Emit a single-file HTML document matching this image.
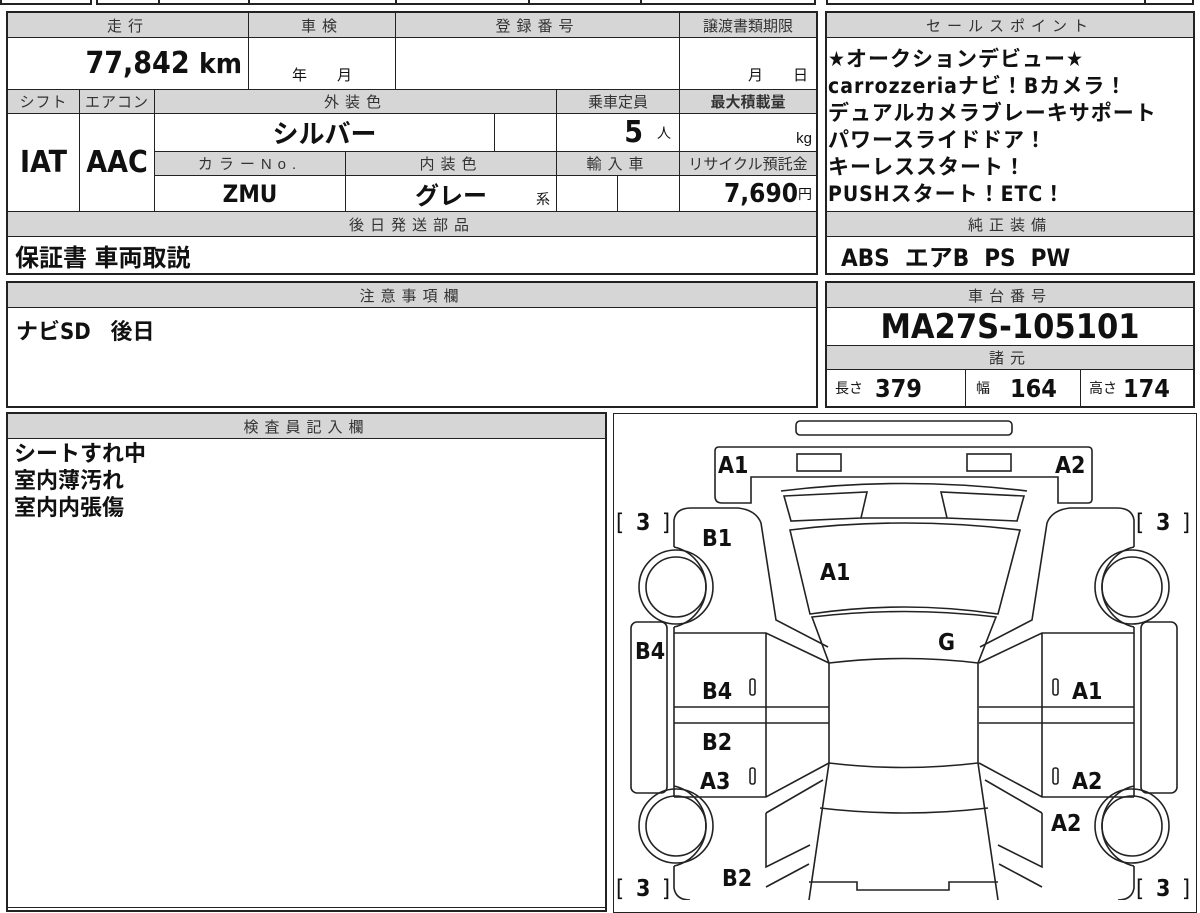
<!DOCTYPE html>
<html><head><meta charset="utf-8"><style>
*{margin:0;padding:0;box-sizing:border-box}
body{width:1200px;height:900px;background:#fff;position:relative;overflow:hidden;font-family:"Liberation Sans","Noto Sans CJK JP",sans-serif;color:#111}
.c{position:absolute;border:1.5px solid #222;background:#fff;display:flex;align-items:center;justify-content:center;overflow:hidden;white-space:nowrap}
.h{background:#d6d6d6;font-size:15px;letter-spacing:6px;color:#333}
.b{font-weight:bold;font-family:"DejaVu Sans Condensed","Liberation Sans","Noto Sans CJK JP",sans-serif}
.box{position:absolute;border:2px solid #222}
svg text{font-family:"DejaVu Sans Condensed","Liberation Sans",sans-serif;font-weight:bold;font-size:23px;fill:#111}
</style></head><body>
<!-- top strip -->
<div style="position:absolute;left:0;top:-10px;width:92px;height:15px;border:2px solid #222"></div>
<div style="position:absolute;left:96px;top:-10px;width:720px;height:15px;border:2px solid #222"></div>
<div style="position:absolute;left:158px;top:0;width:2px;height:5px;background:#222"></div>
<div style="position:absolute;left:248px;top:0;width:2px;height:5px;background:#222"></div>
<div style="position:absolute;left:395px;top:0;width:2px;height:5px;background:#222"></div>
<div style="position:absolute;left:528px;top:0;width:2px;height:5px;background:#222"></div>
<div style="position:absolute;left:640px;top:0;width:2px;height:5px;background:#222"></div>
<div style="position:absolute;left:826px;top:-10px;width:368px;height:15px;border:2px solid #222"></div>
<div style="position:absolute;left:1144px;top:0;width:2px;height:5px;background:#222"></div>

<!-- left main table -->
<div class="c h" style="left:7px;top:12px;width:242px;height:26px">走行</div>
<div class="c h" style="left:248px;top:12px;width:148px;height:26px">車検</div>
<div class="c h" style="left:395px;top:12px;width:285px;height:26px">登録番号</div>
<div class="c h" style="left:679px;top:12px;width:138px;height:26px;letter-spacing:0">譲渡書類期限</div>
<div class="c b" style="left:7px;top:37px;width:242px;height:53px;justify-content:flex-end;padding-right:6px;font-size:30px">77,842&nbsp;<span style="font-size:28px">km</span></div>
<div class="c" style="left:248px;top:37px;width:148px;height:53px;align-items:flex-end;padding-bottom:4px;font-size:15px">年&emsp;&emsp;月</div>
<div class="c" style="left:395px;top:37px;width:285px;height:53px"></div>
<div class="c" style="left:679px;top:37px;width:138px;height:53px;align-items:flex-end;padding-bottom:4px;font-size:15px;justify-content:flex-end;padding-right:8px">月&emsp;&emsp;日</div>

<div class="c h" style="left:7px;top:89px;width:73px;height:25px;letter-spacing:1px">シフト</div>
<div class="c h" style="left:79px;top:89px;width:76px;height:25px;letter-spacing:1px">エアコン</div>
<div class="c h" style="left:154px;top:89px;width:403px;height:25px">外装色</div>
<div class="c h" style="left:556px;top:89px;width:124px;height:25px;letter-spacing:0">乗車定員</div>
<div class="c h" style="left:679px;top:89px;width:138px;height:25px;letter-spacing:0;font-weight:bold">最大積載量</div>
<div class="c b" style="left:7px;top:113px;width:73px;height:99px;font-size:30px">IAT</div>
<div class="c b" style="left:79px;top:113px;width:76px;height:99px;font-size:30px">AAC</div>
<div class="c b" style="left:154px;top:113px;width:341px;height:39px;font-size:26px">シルバー</div>
<div class="c" style="left:494px;top:113px;width:63px;height:39px"></div>
<div class="c b" style="left:556px;top:113px;width:124px;height:39px;justify-content:flex-end;padding-right:8px;font-size:30px">5 <span style="font-size:14px;font-weight:normal;margin-left:14px">人</span></div>
<div class="c" style="left:679px;top:113px;width:138px;height:39px;justify-content:flex-end;padding-right:4px;font-size:15px;align-items:flex-end;padding-bottom:4px">kg</div>
<div class="c h" style="left:154px;top:151px;width:192px;height:25px">カラーNo.</div>
<div class="c h" style="left:345px;top:151px;width:212px;height:25px">内装色</div>
<div class="c h" style="left:556px;top:151px;width:124px;height:25px">輸入車</div>
<div class="c h" style="left:679px;top:151px;width:138px;height:25px;letter-spacing:0">リサイクル預託金</div>
<div class="c b" style="left:154px;top:175px;width:192px;height:37px;font-size:24px">ZMU</div>
<div class="c b" style="left:345px;top:175px;width:212px;height:37px;font-size:24px">グレー<span style="position:absolute;right:6px;bottom:2px;font-size:14px;font-weight:normal">系</span></div>
<div class="c" style="left:556px;top:175px;width:62px;height:37px"></div>
<div class="c" style="left:617px;top:175px;width:63px;height:37px"></div>
<div class="c b" style="left:679px;top:175px;width:138px;height:37px;justify-content:flex-end;padding-right:4px;font-size:26px">7,690<span style="font-size:14px;font-weight:normal">円</span></div>
<div class="c h" style="left:7px;top:211px;width:810px;height:26px">後日発送部品</div>
<div class="c b" style="left:7px;top:236px;width:810px;height:38px;justify-content:flex-start;padding-left:7px;font-size:24px">保証書 車両取説</div>
<div class="box" style="left:6px;top:11px;width:812px;height:264px"></div>

<!-- sales point -->
<div class="c h" style="left:826px;top:12px;width:368px;height:26px">セールスポイント</div>
<div class="c b" style="left:826px;top:37px;width:368px;height:175px;display:block;font-size:21px;letter-spacing:1px;line-height:27px;padding:8px 0 0 1px;white-space:pre">★オークションデビュー★
carrozzeriaナビ！Bカメラ！
デュアルカメラブレーキサポート
パワースライドドア！
キーレススタート！
PUSHスタート！ETC！</div>
<div class="c h" style="left:826px;top:211px;width:368px;height:26px">純正装備</div>
<div class="c b" style="left:826px;top:236px;width:368px;height:38px;justify-content:flex-start;padding-left:14px;font-size:24px">ABS&nbsp; エアB&nbsp; PS&nbsp; PW</div>
<div class="box" style="left:825px;top:11px;width:370px;height:264px"></div>

<!-- 注意事項 -->
<div class="c h" style="left:7px;top:282px;width:810px;height:26px">注意事項欄</div>
<div class="c b" style="left:7px;top:307px;width:810px;height:100px;align-items:flex-start;justify-content:flex-start;padding:6px 0 0 8px;font-size:22px">ナビSD&emsp;後日</div>
<div class="box" style="left:6px;top:281px;width:812px;height:127px"></div>

<!-- 車台番号 -->
<div class="c h" style="left:826px;top:282px;width:368px;height:26px">車台番号</div>
<div class="c b" style="left:826px;top:307px;width:368px;height:39px;font-size:34px">MA27S-105101</div>
<div class="c h" style="left:826px;top:345px;width:368px;height:25px">諸元</div>
<div class="c" style="left:826px;top:369px;width:140px;height:38px;justify-content:flex-start;padding-left:8px;font-size:14px">長さ <b class="b" style="font-size:25px;margin-left:12px">379</b></div>
<div class="c" style="left:965px;top:369px;width:116px;height:38px;justify-content:flex-start;padding-left:10px;font-size:14px">幅 <b class="b" style="font-size:25px;margin-left:20px">164</b></div>
<div class="c" style="left:1080px;top:369px;width:114px;height:38px;justify-content:flex-start;padding-left:8px;font-size:14px">高さ <b class="b" style="font-size:25px;margin-left:6px">174</b></div>
<div class="box" style="left:825px;top:281px;width:370px;height:127px"></div>

<!-- 検査員記入欄 -->
<div class="c h" style="left:7px;top:413px;width:599px;height:26px">検査員記入欄</div>
<div class="c b" style="left:7px;top:438px;width:599px;height:470px;display:block;font-size:22px;line-height:27px;padding:2px 0 0 6px;white-space:pre">シートすれ中
室内薄汚れ
室内内張傷</div>
<div class="box" style="left:6px;top:412px;width:601px;height:500px"></div>

<!-- diagram -->
<div class="box" style="left:613px;top:413px;width:584px;height:500px;border-width:1.5px"></div>
<svg style="position:absolute;left:0;top:0" width="1200" height="900" viewBox="0 0 1200 900">
<g fill="none" stroke="#222" stroke-width="1.6">
<rect x="796" y="421" width="216" height="14" rx="4"/>
<path d="M719,447 L1088,447 Q1092,447 1092,451 L1092,499 Q1092,503 1088,503 L1058,503 L1058,477 L751,477 L751,503 L722,503 Q715,503 715,496 L715,451 Q715,447 719,447 Z"/>
<rect x="797" y="454" width="44" height="17"/>
<rect x="967" y="454" width="44" height="17"/>
<path d="M781,491 Q904,476 1027,491"/>
<path d="M784,496 L867,492 L861,518 L791,521 Z"/>
<path d="M1024,496 L941,492 L947,518 L1017,521 Z"/>
<path d="M861,518 L947,518"/>
<path d="M790,530 Q904,516 1020,530 L998,614 Q904,600 810,614 Z"/>
<path d="M812,617 Q904,606 996,617 L978,663 Q904,654 829,663 Z"/>
<path d="M829,663 L829,763 Q904,772 978,763 L978,663"/>
<path d="M829,763 L809,900 M978,763 L998,900"/>
<path d="M820,808 Q904,818 988,808"/>
<path d="M809,882 L857,882 L857,890 L949,890 L949,882 L998,882"/>
</g>
<g id="side" fill="none" stroke="#222" stroke-width="1.6">
<path d="M674,547 L674,520 Q676,508 691,508 L738,508 Q756,510 761,523 L776,620 L828,647"/>
<circle cx="676" cy="587" r="37"/><circle cx="676" cy="587" r="30"/>
<path d="M674,547 A41,41 0 0 1 674,627"/>
<rect x="631" y="622" width="36" height="171" rx="6"/>
<path d="M674,633 L766,633 L829,663 M766,633 L766,797 M674,707 L829,707 M674,723 L829,723 M674,797 L766,797 L829,763 M674,627 L674,797"/>
<path d="M766,813 L823,780 M766,813 L766,867 L810,845"/>
<circle cx="676" cy="826" r="37"/><circle cx="676" cy="826" r="30"/>
<path d="M674,786 A41,41 0 0 1 674,866"/>
<path d="M674,866 L674,888 Q676,900 690,900 M766,887 L809,864"/>
<rect x="750" y="679" width="5" height="16" rx="2"/>
<rect x="750" y="768" width="5" height="16" rx="2"/>
</g>
<use href="#side" transform="translate(1808,0) scale(-1,1)"/>
<text x="718" y="473">A1</text><text x="1055" y="473">A2</text>
<text x="702" y="546">B1</text><text x="820" y="580">A1</text>
<text x="938" y="650">G</text><text x="635" y="659">B4</text>
<text x="702" y="699">B4</text><text x="1072" y="699">A1</text>
<text x="702" y="750">B2</text><text x="700" y="789">A3</text>
<text x="1072" y="789">A2</text><text x="1051" y="831">A2</text>
<text x="722" y="886">B2</text>
<g style="font-size:21px;font-weight:normal">
<text x="616" y="530" style="font-weight:normal">[</text><text x="636" y="530">3</text><text x="662" y="530" style="font-weight:normal">]</text>
<text x="1136" y="530" style="font-weight:normal">[</text><text x="1156" y="530">3</text><text x="1182" y="530" style="font-weight:normal">]</text>
<text x="616" y="896" style="font-weight:normal">[</text><text x="636" y="896">3</text><text x="662" y="896" style="font-weight:normal">]</text>
<text x="1136" y="896" style="font-weight:normal">[</text><text x="1156" y="896">3</text><text x="1182" y="896" style="font-weight:normal">]</text>
</g>
</svg>
</body></html>
